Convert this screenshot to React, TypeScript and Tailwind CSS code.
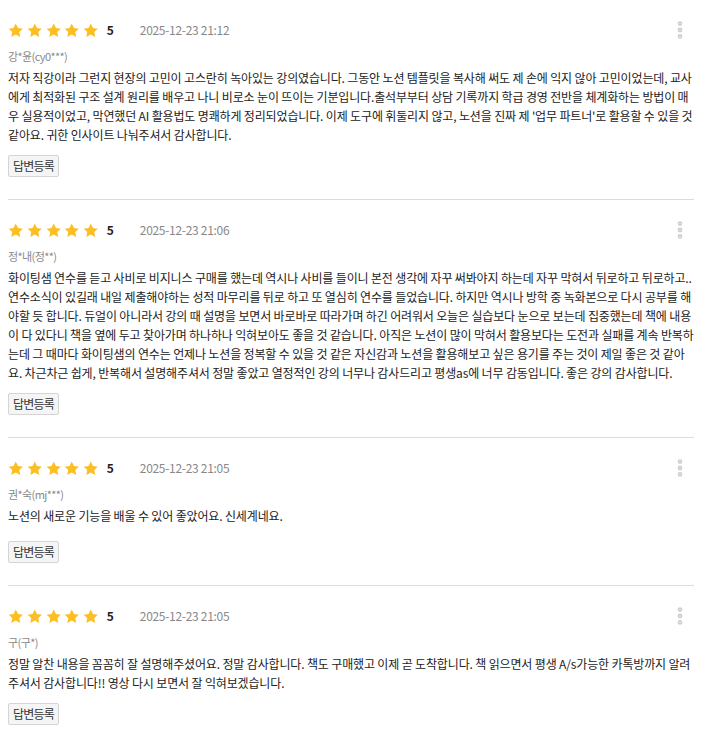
import { MoreVertical } from 'lucide-react';

type Review = {
  date: string;
  name: string;
  body: string;
};

const reviews: Review[] = [
  {
    date: '2025-12-23 21:12',
    name: '강*윤(cy0***)',
    body: "저자 직강이라 그런지 현장의 고민이 고스란히 녹아있는 강의였습니다. 그동안 노션 템플릿을 복사해 써도 제 손에 익지 않아 고민이었는데, 교사에게 최적화된 구조 설계 원리를 배우고 나니 비로소 눈이 뜨이는 기분입니다.출석부부터 상담 기록까지 학급 경영 전반을 체계화하는 방법이 매우 실용적이었고, 막연했던 AI 활용법도 명쾌하게 정리되었습니다. 이제 도구에 휘둘리지 않고, 노션을 진짜 제 '업무 파트너'로 활용할 수 있을 것 같아요. 귀한 인사이트 나눠주셔서 감사합니다.",
  },
  {
    date: '2025-12-23 21:06',
    name: '정*내(정**)',
    body: '화이팅샘 연수를 듣고 사비로 비지니스 구매를 했는데 역시나 사비를 들이니 본전 생각에 자꾸 써봐야지 하는데 자꾸 막혀서 뒤로하고 뒤로하고.. 연수소식이 있길래 내일 제출해야하는 성적 마무리를 뒤로 하고 또 열심히 연수를 들었습니다. 하지만 역시나 방학 중 녹화본으로 다시 공부를 해야할 듯 합니다. 듀얼이 아니라서 강의 때 설명을 보면서 바로바로 따라가며 하긴 어려워서 오늘은 실습보다 눈으로 보는데 집중했는데 책에 내용이 다 있다니 책을 옆에 두고 찾아가며 하나하나 익혀보아도 좋을 것 같습니다. 아직은 노션이 많이 막혀서 활용보다는 도전과 실패를 계속 반복하는데 그 때마다 화이팅샘의 연수는 언제나 노션을 정복할 수 있을 것 같은 자신감과 노션을 활용해보고 싶은 용기를 주는 것이 제일 좋은 것 같아요. 차근차근 쉽게, 반복해서 설명해주셔서 정말 좋았고 열정적인 강의 너무나 감사드리고 평생as에 너무 감동입니다. 좋은 강의 감사합니다.',
  },
  {
    date: '2025-12-23 21:05',
    name: '권*숙(mj***)',
    body: '노션의 새로운 기능을 배울 수 있어 좋았어요. 신세계네요.',
  },
  {
    date: '2025-12-23 21:05',
    name: '구(구*)',
    body: '정말 알찬 내용을 꼼꼼히 잘 설명해주셨어요. 정말 감사합니다. 책도 구매했고 이제 곧 도착합니다. 책 읽으면서 평생 A/s가능한 카톡방까지 알려주셔서 감사합니다!! 영상 다시 보면서 잘 익혀보겠습니다.',
  },
];

function Star() {
  return (
    <svg viewBox="0 0 24 23" className="h-[15px] w-[15.5px]" fill="#fbbf24">
      <path d="M12 .6l3.4 7 7.6 1-5.5 5.3 1.4 7.6L12 17.8l-6.9 3.7 1.4-7.6L1 8.6l7.6-1z" />
    </svg>
  );
}

function ReviewItem({ review, last }: { review: Review; last: boolean }) {
  return (
    <div className={`pt-[21px] pb-[22px] ${last ? '' : 'border-b border-[#dcdcdc]'}`}>
      <div className="flex h-[18px] items-center">
        <div className="flex gap-[3.3px]">
          {[0, 1, 2, 3, 4].map((i) => (
            <Star key={i} />
          ))}
        </div>
        <span className="ml-[8px] text-[12px] font-bold text-[#222]">5</span>
        <span className="ml-[26px] text-[12px] tracking-[-0.3px] text-[#888]">{review.date}</span>
        <button className="ml-auto mr-[3px] text-[#cfcfcf]">
          <MoreVertical size={22} strokeWidth={3.2} />
        </button>
      </div>
      <p className="mt-[7px] text-[11px] leading-[20px] tracking-[-0.6px] text-[#888]">{review.name}</p>
      <p className="mt-[2px] min-h-[24px] break-all text-[12px] leading-[19px] tracking-[-0.15px] text-[#222]">
        {review.body}
      </p>
      <button className="mt-[11px] h-[22px] rounded-[2px] border border-[#d4d4d4] bg-[#f5f5f5] px-[4px] text-[12px] tracking-[-0.8px] text-[#333]">
        답변등록
      </button>
    </div>
  );
}

export default function App() {
  return (
    <div
      className="bg-white pl-[8px] pr-[8px]"
      style={{ fontFamily: '"Noto Sans CJK KR", "Noto Sans", sans-serif' }}
    >
      {reviews.map((r, i) => (
        <ReviewItem key={i} review={r} last={i === reviews.length - 1} />
      ))}
    </div>
  );
}
